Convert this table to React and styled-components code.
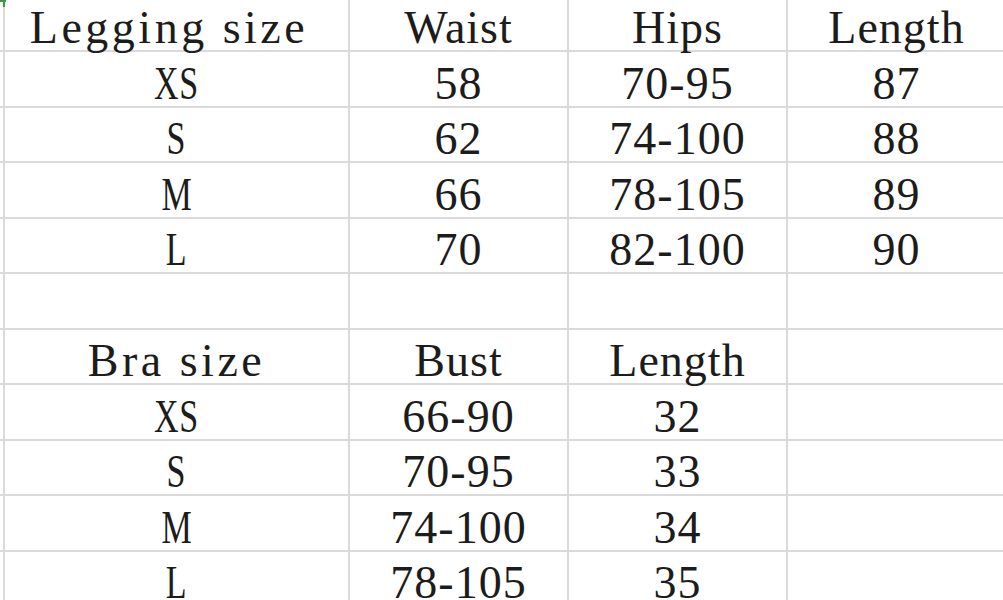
import styled, { createGlobalStyle } from 'styled-components';

const ROWS = [
  ['Legging size ', 'Waist', 'Hips', 'Length'],
  ['XS', '58', '70-95', '87'],
  ['S', '62', '74-100', '88'],
  ['M', '66', '78-105', '89'],
  ['L', '70', '82-100', '90'],
  ['', '', '', ''],
  ['Bra size', 'Bust', 'Length', ''],
  ['XS', '66-90', '32', ''],
  ['S', '70-95', '33', ''],
  ['M', '74-100', '34', ''],
  ['L', '78-105', '35', ''],
];

const WIDE = ['Legging size ', 'Bra size'];
// while single capitals come out wider
const SIZES = ['XS', 'S', 'M', 'L'];

function App() {
  return (
    <>
      <GlobalStyle />
      <Page>
        <SelectionMark />
        <Sheet>
          {ROWS.map((row, r) => [
            <Gutter key={`g${r}`} />,
            ...row.map((text, c) => (
              <Cell key={`${r}-${c}`} $wide={WIDE.includes(text)}>
                <Label $narrow={SIZES.includes(text)}>{text}</Label>
              </Cell>
            )),
          ])}
        </Sheet>
      </Page>
    </>
  );
}

const GlobalStyle = createGlobalStyle`
  html, body {
    margin: 0;
    padding: 0;
    background: #ffffff;
  }
  body {
    overflow: hidden;
  }
`;

const Page = styled.div`
  position: relative;
  width: 1003px;
  height: 600px;
  overflow: hidden;
  background: #ffffff;
`;

const Sheet = styled.div`
  display: grid;
  grid-template-columns: 5px 345px 219px 219px 219px;
  grid-auto-rows: 55.5px;
  margin-top: -3.5px;
`;

const Gutter = styled.div`
  box-sizing: border-box;
  border-right: 2px solid #dadada;
  border-bottom: 2px solid #dadada;
`;

const Cell = styled.div`
  box-sizing: border-box;
  display: flex;
  align-items: flex-end;
  justify-content: center;
  border-right: 2px solid #dadada;
  border-bottom: 2px solid #dadada;
  font-family: 'Liberation Serif', 'Times New Roman', serif;
  font-size: 46px;
  line-height: 1;
  color: #1c1c1c;
  white-space: pre;
  letter-spacing: ${({ $wide }) => ($wide ? '3.5px' : '1px')};
`;

const Label = styled.span`
  display: inline-block;
  margin-bottom: -1px;
  transform: ${({ $narrow }) => ($narrow ? 'scaleX(0.74)' : 'none')};
`;

const SelectionMark = styled.div`
  position: absolute;
  left: 3px;
  top: 0;
  width: 2px;
  height: 7px;
  background: #3a9a3f;

  &::before {
    content: '';
    position: absolute;
    left: -3px;
    top: 0;
    width: 6px;
    height: 2px;
    background: #3a9a3f;
  }
`;

export default App;
